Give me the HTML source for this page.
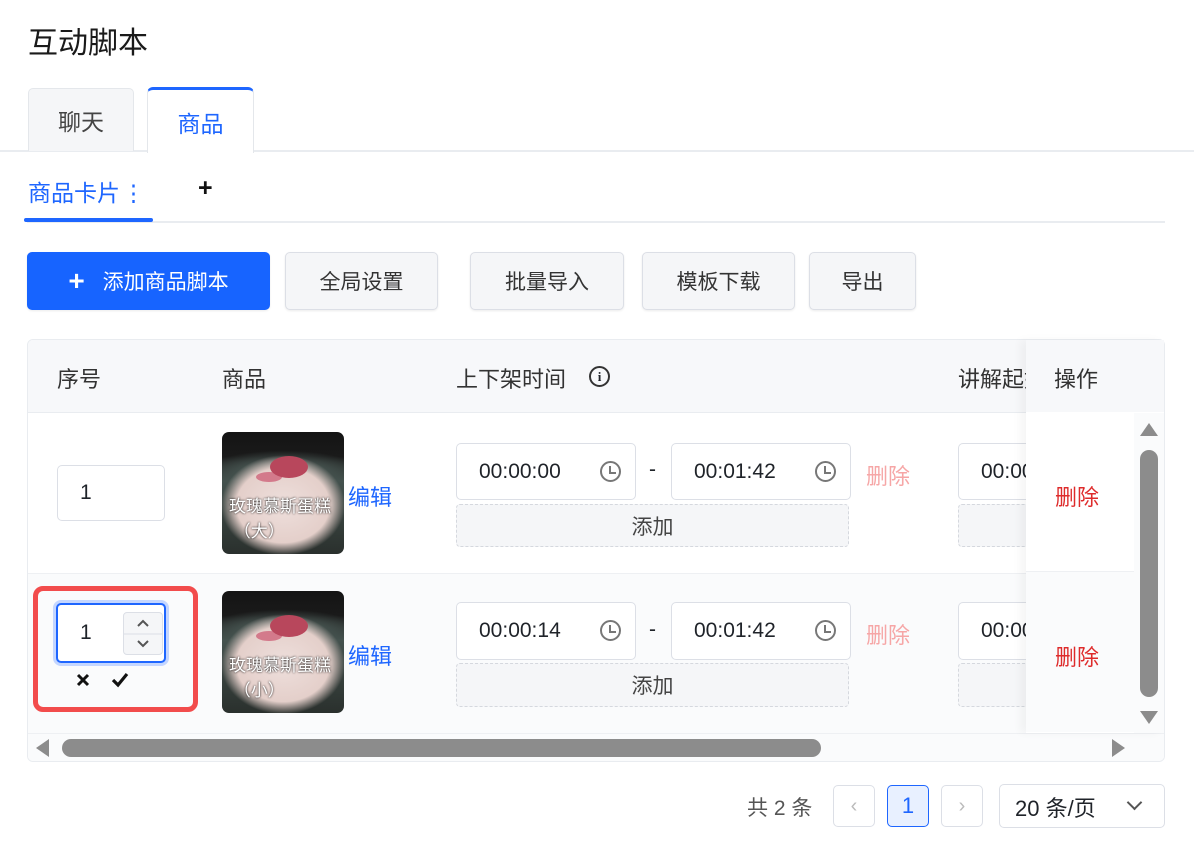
<!DOCTYPE html>
<html><head><meta charset="utf-8">
<style>
*{box-sizing:border-box;margin:0;padding:0}
body{width:1194px;height:858px;background:#fff;font-family:"Liberation Sans","Noto Sans CJK SC",sans-serif;color:#1f2329;position:relative;overflow:hidden}
.a{position:absolute}
.btn{position:absolute;top:252px;height:58px;border:1px solid #dcdfe6;border-radius:5px;background:#f5f6f8;font-size:21px;color:#333;display:flex;align-items:center;justify-content:center;box-shadow:0 1px 2px rgba(0,0,0,.08)}
.inp{position:absolute;background:#fff;border:1px solid #dcdfe6;border-radius:5px;font-size:21px;display:flex;align-items:center}
.clock{position:absolute;right:14px;top:17px;width:21px;height:21px;border:2px solid #777;border-radius:50%}
.clock:after{content:"";position:absolute;left:7px;top:3px;width:5px;height:6px;border-left:2px solid #777;border-bottom:2px solid #777}
.add{position:absolute;border:1px dashed #d5d8de;background:#f5f6f8;border-radius:4px;font-size:21px;color:#444;display:flex;align-items:center;justify-content:center}
.img{position:absolute;width:122px;height:122px;border-radius:7px;overflow:hidden;background:
radial-gradient(ellipse 62px 50px at 50% 60%,#eedfdc 0%,#e4cfca 75%,rgba(0,0,0,0) 100%),
radial-gradient(ellipse 75px 18px at 50% 30%,#5a6d68 0%,rgba(0,0,0,0) 100%),
linear-gradient(#141414 0%,#1a1a1a 20%,#44524e 40%,#2a302d 100%)}
.img i{position:absolute;left:48px;top:24px;width:38px;height:22px;border-radius:50%;background:#b8475c;box-shadow:-20px 10px 0 -6px #d37a8b}
.img span{position:absolute;left:7px;top:62px;color:#fff;font-size:17px;line-height:25px;text-shadow:0 0 2px #000}
.pink{position:absolute;color:#f6a6a6;font-size:21px}
.red{position:absolute;color:#de2b2b;font-size:21px}
.blue{position:absolute;color:#1e66ff;font-size:21px}
.pg{position:absolute;top:785px;width:42px;height:42px;border:1px solid #dcdfe6;border-radius:5px;display:flex;align-items:center;justify-content:center;color:#bbb;font-size:20px}
</style></head><body>
<div class="a" style="left:28px;top:18px;font-size:30px;color:#1a1a1a">互动脚本</div>

<div class="a" style="left:0;top:150px;width:1194px;height:2px;background:#e9ecf0"></div>
<div class="a" style="left:28px;top:88px;width:106px;height:63px;background:#f5f6f8;border:1px solid #e4e7eb;border-bottom:none;border-radius:5px 5px 0 0;font-size:23px;color:#444;display:flex;align-items:center;justify-content:center">聊天</div>
<div class="a" style="left:147px;top:87px;width:107px;height:66px;background:#fff;border:1px solid #e4e7eb;border-top:3px solid #1e66ff;border-bottom:none;border-radius:6px 6px 0 0;font-size:23px;color:#1e66ff;display:flex;align-items:center;justify-content:center">商品</div>

<div class="a" style="left:28px;top:174px;font-size:23px;color:#1e66ff">商品卡片<span style="margin-left:2px">⋮</span></div>
<div class="a" style="left:198px;top:174px;font-size:25px;font-weight:bold;color:#111">+</div>
<div class="a" style="left:27px;top:221px;width:1138px;height:2px;background:#e9ecf0"></div>
<div class="a" style="left:24px;top:218px;width:129px;height:4px;background:#1e66ff;border-radius:2px"></div>

<div class="btn" style="left:27px;width:243px;background:#1764ff;border-color:#1764ff;color:#fff"><b style="font-size:28px;margin-right:18px;font-weight:bold">+</b>添加商品脚本</div>
<div class="btn" style="left:285px;width:153px">全局设置</div>
<div class="btn" style="left:470px;width:154px">批量导入</div>
<div class="btn" style="left:642px;width:153px">模板下载</div>
<div class="btn" style="left:809px;width:107px">导出</div>

<div class="a" style="left:27px;top:339px;width:1138px;height:423px;border:1px solid #e9ecf0;border-radius:6px;overflow:hidden;background:#fff">
 <div class="a" style="left:0;top:0;width:1138px;height:73px;background:#f7f8fa;border-bottom:1px solid #e9ecf0"></div>
 <div class="a" style="left:0;top:233px;width:1138px;height:160px;background:#fafbfc;border-top:1px solid #eef0f3"></div>
 <div class="a" style="left:0;top:393px;width:1138px;height:28px;background:#fafbfc;border-top:1px solid #eef0f3"></div>
</div>
<div class="a" style="left:57px;top:362px;font-size:22px;color:#333">序号</div>
<div class="a" style="left:222px;top:362px;font-size:22px;color:#333">商品</div>
<div class="a" style="left:456px;top:362px;font-size:22px;color:#333">上下架时间</div>
<div class="a" style="left:589px;top:366px;width:21px;height:21px;border:2px solid #333;border-radius:50%;font-size:13px;font-weight:bold;text-align:center;line-height:17px;font-family:'Liberation Serif',serif">i</div>
<div class="a" style="left:958px;top:362px;font-size:22px;color:#333;width:68px;overflow:hidden;white-space:nowrap">讲解起始</div>

<div class="inp" style="left:57px;top:465px;width:108px;height:56px;padding-left:22px">1</div>
<div class="img" style="left:222px;top:432px"><i></i><span>玫瑰慕斯蛋糕<br>&nbsp;（大）</span></div>
<div class="blue" style="left:348px;top:480px;font-size:22px">编辑</div>
<div class="inp" style="left:456px;top:443px;width:180px;height:57px;padding-left:22px">00:00:00<div class="clock"></div></div>
<div class="a" style="left:649px;top:458px;font-size:21px">-</div>
<div class="inp" style="left:671px;top:443px;width:180px;height:57px;padding-left:22px">00:01:42<div class="clock"></div></div>
<div class="pink" style="left:866px;top:459px;font-size:22px">删除</div>
<div class="add" style="left:456px;top:504px;width:393px;height:43px">添加</div>
<div class="inp" style="left:958px;top:443px;width:100px;height:57px;padding-left:22px">00:00</div>
<div class="add" style="left:958px;top:504px;width:100px;height:43px"></div>

<div class="a" style="left:33px;top:586px;width:165px;height:126px;border:5px solid #f24c4c;border-radius:10px"></div>
<div class="a" style="left:53px;top:600px;width:116px;height:66px;border:4px solid #c4d6ff;border-radius:8px"></div>
<div class="inp" style="left:56px;top:603px;width:110px;height:60px;border:2px solid #1e66ff;padding-left:22px">1</div>
<div class="a" style="left:123px;top:612px;width:40px;height:43px;border:1px solid #dcdfe6;border-radius:4px;background:#f5f6f8">
<svg width="38" height="41" style="position:absolute;left:0;top:0"><line x1="0" y1="21" x2="38" y2="21" stroke="#dcdfe6"/><path d="M14 13 L19 8 L24 13" fill="none" stroke="#555" stroke-width="2"/><path d="M14 28 L19 33 L24 28" fill="none" stroke="#555" stroke-width="2"/></svg></div>
<svg class="a" style="left:76px;top:673px" width="14" height="14"><path d="M2 2L12 12M12 2L2 12" stroke="#111" stroke-width="3"/></svg>
<svg class="a" style="left:111px;top:672px" width="18" height="16"><path d="M2 8L7 13L16 2" fill="none" stroke="#111" stroke-width="3.2"/></svg>
<div class="img" style="left:222px;top:591px"><i></i><span>玫瑰慕斯蛋糕<br>&nbsp;（小）</span></div>
<div class="blue" style="left:348px;top:639px;font-size:22px">编辑</div>
<div class="inp" style="left:456px;top:602px;width:180px;height:58px;padding-left:22px">00:00:14<div class="clock"></div></div>
<div class="a" style="left:649px;top:618px;font-size:21px">-</div>
<div class="inp" style="left:671px;top:602px;width:180px;height:58px;padding-left:22px">00:01:42<div class="clock"></div></div>
<div class="pink" style="left:866px;top:618px;font-size:22px">删除</div>
<div class="add" style="left:456px;top:663px;width:393px;height:44px">添加</div>
<div class="inp" style="left:958px;top:602px;width:100px;height:58px;padding-left:22px">00:00</div>
<div class="add" style="left:958px;top:663px;width:100px;height:44px"></div>

<div class="a" style="left:1026px;top:340px;width:138px;height:393px;background:#fff;box-shadow:-6px 0 8px rgba(0,0,0,.04)">
 <div style="height:72px;background:#f7f8fa"></div>
 <div style="height:160px;background:#fff;border-bottom:1px solid #eef0f3"></div>
 <div style="height:160px;background:#fafbfc"></div>
</div>
<div class="a" style="left:1054px;top:362px;font-size:22px;color:#333">操作</div>
<div class="red" style="left:1055px;top:480px;font-size:22px">删除</div>
<div class="red" style="left:1055px;top:640px;font-size:22px">删除</div>

<div class="a" style="left:1134px;top:413px;width:30px;height:320px;background:#fafbfc"></div>
<div class="a" style="left:1140px;top:423px;width:0;height:0;border-left:9px solid transparent;border-right:9px solid transparent;border-bottom:13px solid #8c8c8c"></div>
<div class="a" style="left:1140px;top:450px;width:18px;height:247px;border-radius:9px;background:#8c8c8c"></div>
<div class="a" style="left:1140px;top:711px;width:0;height:0;border-left:9px solid transparent;border-right:9px solid transparent;border-top:13px solid #8c8c8c"></div>
<div class="a" style="left:36px;top:739px;width:0;height:0;border-top:9px solid transparent;border-bottom:9px solid transparent;border-right:13px solid #8c8c8c"></div>
<div class="a" style="left:62px;top:739px;width:759px;height:18px;border-radius:9px;background:#8c8c8c"></div>
<div class="a" style="left:1112px;top:739px;width:0;height:0;border-top:9px solid transparent;border-bottom:9px solid transparent;border-left:13px solid #8c8c8c"></div>

<div class="a" style="left:747px;top:792px;font-size:21px;color:#555">共 2 条</div>
<div class="pg" style="left:833px">‹</div>
<div class="pg" style="left:887px;background:#e8f0ff;border-color:#1e66ff;color:#1e66ff;font-size:22px">1</div>
<div class="pg" style="left:941px">›</div>
<div class="a" style="left:999px;top:784px;width:166px;height:44px;border:1px solid #dcdfe6;border-radius:5px;font-size:22px;padding:6px 0 0 15px">20 条/页<span style="position:absolute;right:24px;top:12px;width:11px;height:11px;border-right:2.5px solid #555;border-bottom:2.5px solid #555;transform:rotate(45deg)"></span></div>
</body></html>
